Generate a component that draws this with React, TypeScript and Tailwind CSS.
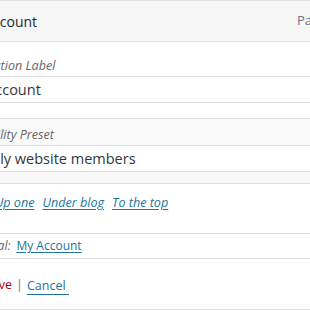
export default function App() {
  return (
    <div className="w-[310px] h-[310px] overflow-hidden bg-white text-[13px] text-[#32373c] [font-family:'Open_Sans',sans-serif]">
      <div className="ml-[-40px] w-[400px]">
        {/* item bar */}
        <div className="flex h-[42px] items-center border-y border-[#e2e2e2] bg-[#f6f6f6]">
          <span className="flex-1 pl-[1px] text-[14px] font-medium text-[#23282d]">My Account</span>
          <span className="w-[63px] text-[#72777c]">Page</span>
        </div>

        {/* navigation label */}
        <div className="mt-[13px] pl-[2px] text-[12.6px] leading-[21px] italic text-[#666]">Navigation Label</div>
        <div className="flex h-[27px] items-center border-y border-[#dddddd] pl-[2px] text-[14.5px]">My Account</div>

        {/* visibility */}
        <div className="mt-[15px] border-y border-[#dddddd] bg-[#f9f9f9] pb-[11px] pt-[6px]">
          <div className="pl-[11px] text-[12.6px] leading-[20px] italic text-[#666]">Visibility Preset</div>
          <div className="flex h-[27px] items-center border-y border-[#dddddd] bg-white pl-[20px] text-[14.5px]">
            Only website members
          </div>
        </div>

        {/* move */}
        <div className="mt-[9px] flex gap-[8px] text-[12.6px] leading-[20px] italic">
          <span className="-ml-[3px] text-[#666]">Move</span>
          <a className="text-[#21759b] underline underline-offset-2">Up one</a>
          <a className="text-[#21759b] underline underline-offset-2">Under blog</a>
          <a className="text-[#21759b] underline underline-offset-2">To the top</a>
        </div>

        <div className="mt-[20px] flex h-[26px] items-center gap-[6px] border-y border-[#dddddd] pl-[5px] text-[12px]">
          <span className="italic text-[#666]">Original:</span>
          <a className="text-[#21759b] underline underline-offset-2">My Account</a>
        </div>

        <div className="flex h-[51px] items-center gap-[4px] border-b border-[#dddddd] pl-[5px] pt-[3px] text-[12.5px]">
          <a className="text-[#aa0000]">Remove</a>
          <span className="text-[#72777c]">|</span>
          <a className="border-b border-[#21759b] pr-[3px] leading-[17px] text-[#21759b]">Cancel</a>
        </div>
      </div>
    </div>
  );
}
